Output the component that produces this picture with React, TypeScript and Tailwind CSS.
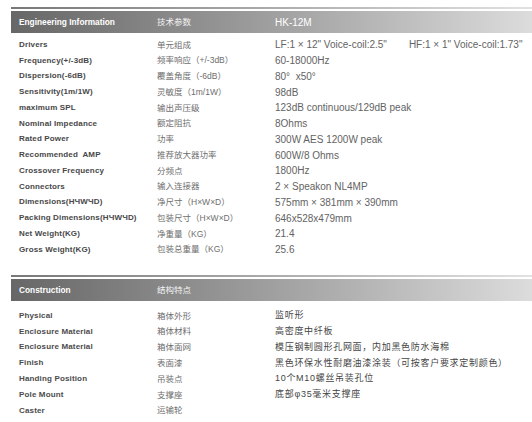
import React from "react";

const spec: [string, string, React.ReactNode][] = [
  ["Drivers", "单元组成", (
    <span className="whitespace-pre">LF:1 × 12" Voice-coil:2.5"<span className="ml-[22px]">HF:1 × 1" Voice-coil:1.73"</span></span>
  )],
  ["Frequency(+/-3dB)", "频率响应（+/-3dB）", "60-18000Hz"],
  ["Dispersion(-6dB)", "覆盖角度（-6dB）", <span className="whitespace-pre">80°  x50°</span>],
  ["Sensitivity(1m/1W)", "灵敏度（1m/1W）", "98dB"],
  ["maximum SPL", "输出声压级", "123dB continuous/129dB peak"],
  ["Nominal Impedance", "额定阻抗", "8Ohms"],
  ["Rated Power", "功率", "300W AES 1200W peak"],
  ["Recommended  AMP", "推荐放大器功率", "600W/8 Ohms"],
  ["Crossover Frequency", "分频点", "1800Hz"],
  ["Connectors", "输入连接器", "2 × Speakon NL4MP"],
  ["Dimensions(HЧWЧD)", "净尺寸（H×W×D）", "575mm × 381mm × 390mm"],
  ["Packing Dimensions(HЧWЧD)", "包装尺寸（H×W×D）", "646x528x479mm"],
  ["Net Weight(KG)", "净重量（KG）", "21.4"],
  ["Gross Weight(KG)", "包装总重量（KG）", "25.6"],
];

const cons: [string, string, string][] = [
  ["Physical", "箱体外形", "监听形"],
  ["Enclosure Material", "箱体材料", "高密度中纤板"],
  ["Enclosure Material", "箱体面网", "模压钢制圆形孔网面，内加黑色防水海棉"],
  ["Finish", "表面漆", "黑色环保水性耐磨油漆涂装（可按客户要求定制颜色）"],
  ["Handing Position", "吊装点", "10个M10螺丝吊装孔位"],
  ["Pole Mount", "支撑座", "底部φ35毫米支撑座"],
  ["Caster", "运输轮", ""],
];

function Header({ en, zh, val }: { en: string; zh: string; val?: string }) {
  return (
    <div>
      <div className="h-[2px] bg-linear-to-r from-[#787878] to-[#e2e2e2]" />
      <div className="mt-[2px] h-[22px] bg-linear-to-r from-[#676767] to-[#dcdcdc] flex items-center text-white">
        <div className="w-[146px] pl-[8px] text-[8.3px] font-bold">{en}</div>
        <div className="w-[118px] text-[8.5px] text-[#f4f4f4]">{zh}</div>
        {val && <div className="text-[10px]">{val}</div>}
      </div>
    </div>
  );
}

export default function App() {
  return (
    <div className="w-[532px] h-[422px] bg-white overflow-hidden font-['Liberation_Sans','Noto_Sans_CJK_SC',sans-serif]">
      <div className="pt-[7px] pl-[11px]">
        <Header en="Engineering Information" zh="技术参数" val="HK-12M" />
        <div className="mt-[4px] pl-[8px]">
          {spec.map(([a, b, c], i) => (
            <div key={i} className="h-[15.75px] flex items-center">
              <div className="w-[138px] text-[8px] font-bold text-[#484848] tracking-[0.15px] whitespace-pre">{a}</div>
              <div className="w-[118px] text-[8.5px] text-[#6e6e6e]">{b}</div>
              <div className="text-[10px] text-[#636363]">{c}</div>
            </div>
          ))}
        </div>
        <div className="mt-[17.5px]">
          <Header en="Construction" zh="结构特点" />
        </div>
        <div className="mt-[7px] pl-[8px]">
          {cons.map(([a, b, c], i) => (
            <div key={i} className="h-[15.8px] flex items-center">
              <div className="w-[138px] text-[8px] font-bold text-[#4c4c4c] tracking-[0.15px]">{a}</div>
              <div className="w-[118px] text-[8.5px] text-[#6e6e6e]">{b}</div>
              <div className="text-[9px] tracking-[0.7px] text-[#454545]">{c}</div>
            </div>
          ))}
        </div>
      </div>
    </div>
  );
}
